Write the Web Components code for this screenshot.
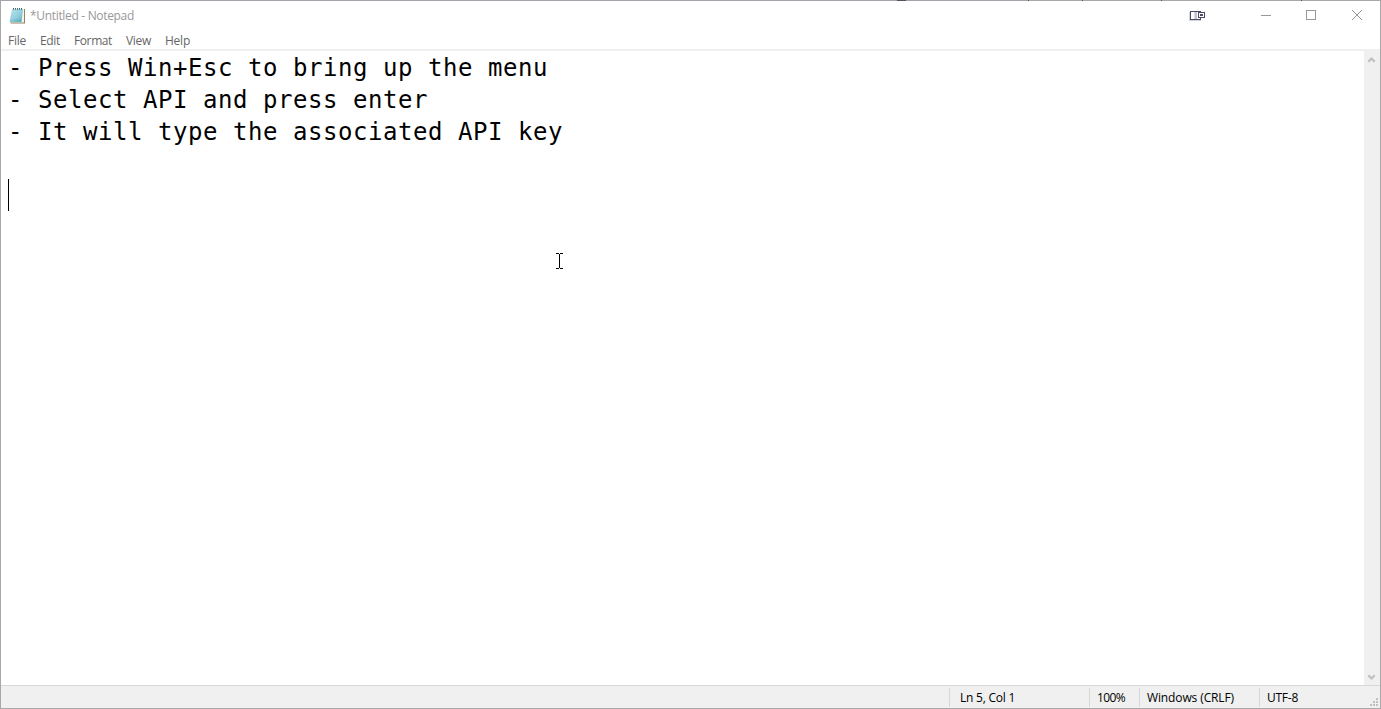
<!DOCTYPE html>
<html lang="en">
<head>
<meta charset="utf-8">
<title>*Untitled - Notepad</title>
<style>
html, body { margin: 0; height: 100%; overflow: hidden; background: #fff; }
</style>
</head>
<body>
<notepad-window></notepad-window>
<script>
function define(name, html, ready) {
  const t = document.createElement('template');
  t.innerHTML = html;
  customElements.define(name, class extends HTMLElement {
    constructor() {
      super();
      this.attachShadow({ mode: 'open' }).append(t.content.cloneNode(true));
    }
    connectedCallback() { if (ready) ready(this); }
  });
}

/* A single-line label whose tracking is adjusted to its nominal width. */
define('ui-label', `
<style>
:host { display: block; white-space: nowrap; flex: none; height: 16px; font: 12px/16px "Open Sans", "Noto Sans", sans-serif; }
span { display: inline-block; }
</style><span><slot></slot></span>`, el => {
  const w = Number(el.getAttribute('width'));
  const natural = el.shadowRoot.querySelector('span').getBoundingClientRect().width;
  el.style.letterSpacing = ((w - natural) / el.textContent.length) + 'px';
  el.style.width = w + 'px';
});

define('notepad-icon', `
<style>:host { display: block; width: 17px; height: 18px; } svg { display: block; }</style>
<svg width="17" height="18" viewBox="0 0 17 18">
  <defs><linearGradient id="g" x1="0" y1="0" x2="1" y2="1"><stop offset="0" stop-color="#b9e4ec"/><stop offset=".5" stop-color="#8dcbdc"/><stop offset="1" stop-color="#4fa6ba"/></linearGradient></defs>
  <path d="M4 2H16V16.5H2L1 15Z" fill="#8d8462"/>
  <path d="M3.5 2H15V15.5H1.5Z" fill="#f5f4e8"/>
  <path d="M3 2H14L12.5 15H.5Z" fill="url(#g)"/>
  <path d="M3.4 5H13M3.1 7H13M2.8 9H12.8M2.4 11H12.5" stroke="#d3f1f6" stroke-width=".6" opacity=".6"/>
  <path d="M4.5 1V2.6M6.5 1V2.6M8.5 1V2.6M10.5 1V2.6M12.5 1V2.6" stroke="#465d66"/>
</svg>`);

define('window-controls', `
<style>
:host { display: flex; height: 29px; align-items: center; }
svg { display: block; flex: none; }
</style>
<svg width="192" height="29" viewBox="1188 1 192 29" fill="none" shape-rendering="crispEdges">
  <path d="M1189.5 12V20.5H1201" stroke="#d5d5df"/>
  <rect x="1190.5" y="11.5" width="10" height="8" stroke="#4b4c62"/>
  <path d="M1194.5 12V19" stroke="#dcdde4"/>
  <path d="M1196 12V19" stroke="#c3c4d0" stroke-width="2"/>
  <rect x="1198.5" y="12.5" width="6" height="5" fill="#fff" stroke="#4b4c62"/>
  <rect x="1200" y="14" width="3" height="2" fill="#4b4c62"/>
  <path d="M1261 15.5H1271" stroke="#999"/>
  <rect x="1306.5" y="10.5" width="9" height="9" stroke="#999"/>
  <path d="M1352 10L1362 20M1362 10L1352 20" stroke="#999" shape-rendering="auto"/>
</svg>`);

define('title-bar', `
<style>
:host { display: flex; height: 29px; color: #999; align-items: center; }
notepad-icon { margin: 0 4px 0 8px; }
window-controls { margin-left: auto; }
ui-label { margin-top: 1px; }
</style>
<notepad-icon></notepad-icon><ui-label width="104">*Untitled - Notepad</ui-label>
<window-controls></window-controls>`);

define('menu-bar', `
<style>
:host { display: flex; height: 19px; padding-left: 7px; gap: 14px; align-items: center; color: #666; border-bottom: 2px solid #f0f0f0; }
ui-label { margin-top: 3px; }
</style>
<ui-label width="18">File</ui-label><ui-label width="20">Edit</ui-label><ui-label width="38">Format</ui-label><ui-label width="25">View</ui-label><ui-label width="25">Help</ui-label>`);

define('text-editor', `
<style>
:host { display: block; flex: 1; padding-left: 7px; font: 24px/34px "DejaVu Sans Mono", monospace; letter-spacing: .55px; color: #000; }
::slotted(div), div { height: 32px; white-space: pre; }
.caret { width: 1px; background: #000; }
svg { position: absolute; left: 555px; top: 252px; }
</style>
<slot></slot><div></div><div class="caret"></div>
<svg width="9" height="18" viewBox="0 0 9 18" shape-rendering="crispEdges"><path d="M1 1.5H4M5 1.5H8M4.5 2V16M1 16.5H4M5 16.5H8" stroke="#000" fill="none"/></svg>`);

define('scroll-bar', `
<style>
:host { display: flex; flex-direction: column; justify-content: space-between; width: 16px; background: #f0f0f0; }
svg { display: block; }
</style>
<svg width="16" height="17" viewBox="0 0 16 17"><path d="M4.3 10.7L7.5 7.5L10.7 10.7" fill="none" stroke="#bfbfbf" stroke-width="2.2"/></svg>
<svg width="16" height="17" viewBox="0 0 16 17"><path d="M4.3 7.3L7.5 10.5L10.7 7.3" fill="none" stroke="#bfbfbf" stroke-width="2.2"/></svg>`);

define('status-bar', `
<style>
:host { display: grid; grid-template-columns: 948px 140px 50px 120px 1fr; height: 22px; border-top: 1px solid #d7d7d7; background: #f0f0f0; color: #000; }
div { display: flex; align-items: center; padding-left: 7px; border-left: 1px solid #d7d7d7; margin: 2px 0 1px; box-sizing: border-box; }
div:first-of-type { border: 0; }
.pos { padding-left: 10px; }
.last { position: relative; }
svg { position: absolute; right: 1px; bottom: 0; }
</style>
<div></div><div class="pos"><ui-label width="55">Ln 5, Col 1</ui-label></div><div><ui-label width="28">100%</ui-label></div><div><ui-label width="87">Windows (CRLF)</ui-label></div>
<div class="last"><ui-label width="31">UTF-8</ui-label><svg width="9" height="9" viewBox="0 0 9 9"><path d="M6 0H8V2H6ZM3 3H5V5H3ZM6 3H8V5H6ZM0 6H2V8H0ZM3 6H5V8H3ZM6 6H8V8H6Z" fill="#bfbfbf"/></svg></div>`);

define('notepad-window', `
<style>
:host { display: flex; flex-direction: column; box-sizing: border-box; width: 1381px; height: 709px; border: 1px solid #a8a8a8; background: #fff; }
main { display: flex; flex: 1; min-height: 0; }
.edge { position: absolute; left: 0; top: 0; }
</style>
<title-bar></title-bar><menu-bar></menu-bar>
<main><text-editor><div>- Press Win+Esc to bring up the menu</div><div>- Select API and press enter</div><div>- It will type the associated API key</div></text-editor><scroll-bar></scroll-bar></main>
<status-bar></status-bar>
<svg class="edge" width="1381" height="1"><path d="M0 0H1028V1H0Z" fill="#a4a5ac"/><path d="M897 0H906V1H897ZM1028 0H1029V1H1028ZM1082 0H1083V1H1082ZM1161 0H1162V1H1161ZM1301 0H1302V1H1301Z" fill="#555059"/></svg>`);
</script>
</body>
</html>
